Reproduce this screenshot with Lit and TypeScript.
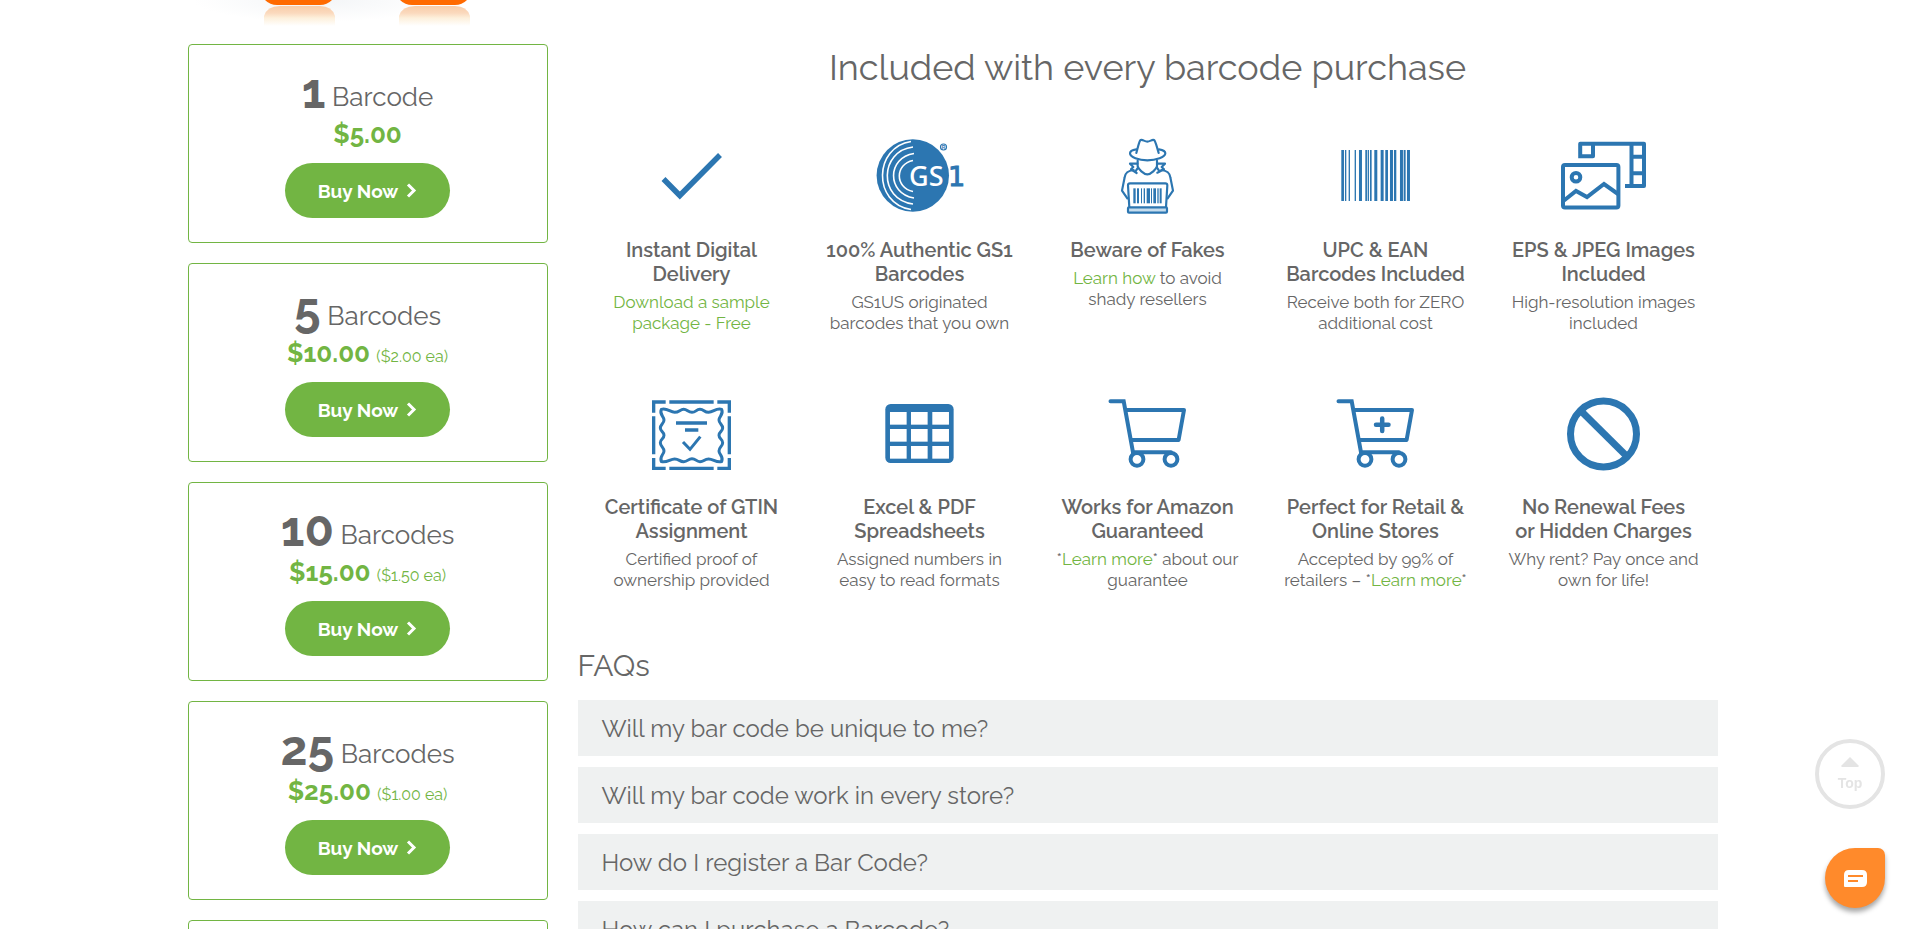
import { LitElement, html, svg, css, nothing, TemplateResult } from "lit";
import { customElement, property } from "lit/decorators.js";

const BLUE = "#2c76b1";

type Bar = [number, number];

const bars = (list: Bar[], top: number, height: number) =>
  list.map(([x, w]) => svg`<rect x=${x} y=${top} width=${w} height=${height} fill=${BLUE}></rect>`);

const UPC_BARS: Bar[] = [
  [724, 8], [735, 4], [746, 4], [764, 4], [777, 9], [796, 5], [803, 4], [810, 5],
  [823, 9], [842, 9], [856, 8], [870, 9], [882, 7], [900, 9], [911, 6], [921, 9],
];

const LAPTOP_BARS: Bar[] = [
  [100, 7], [111, 6], [123, 3], [131, 4], [140, 10], [153, 3], [160, 8], [172, 4], [179, 6],
];

const cartFrame = svg`
  <path d="M10.500 13.300h13.200L33 64.300h38" stroke-linecap="round"></path>
  <path d="M26 22h58l-5.400 30H31" stroke-linejoin="round"></path>
  <circle cx="37" cy="71.300" r="6.400"></circle>
  <circle cx="71" cy="71.300" r="6.400"></circle>`;

const ICONS: Record<string, TemplateResult> = {
  check: svg`<path d="M19.500 48 35.800 64.500 76 24" stroke-width="5.500"></path>`,
  gs1: svg`
    <circle cx="40.800" cy="44.500" r="36.200" fill=${BLUE} stroke="none"></circle>
    <g stroke="#fff" stroke-width="1.600">
      <path d="M39 10.500C2 16 0 72 39 78.500"></path>
      <path d="M41 16C7.500 20 6 68.500 41 73"></path>
      <path d="M42 22.500C15 26.500 14.500 62.500 42 67"></path>
      <path d="M41 29.500C23 33 22.500 56.500 41 60.500"></path>
    </g>
    <text x="37" y="55" font-family="Noto Sans, Open Sans, sans-serif" font-size="27" font-weight="500" fill="#fff" stroke="none">GS</text>
    <text x="76" y="55" font-family="DejaVu Sans, sans-serif" font-size="27" font-weight="500" fill=${BLUE} stroke=${BLUE} stroke-width="1">1</text>
    <circle cx="71.500" cy="16" r="3" stroke-width="1.200"></circle>
    <text x="69.800" y="18.200" font-family="Liberation Sans, sans-serif" font-size="5" font-weight="700" fill=${BLUE} stroke="none">R</text>`,
  fakes: svg`
    <g transform="translate(0 -1) scale(.3333)" stroke-width="6.500" stroke-linecap="round" stroke-linejoin="round">
      <path d="M109 69c4-14 7-30 11-37 5-7 13 3 22 3s17-10 22-3c4 7 8 23 12 37"></path>
      <path d="M109 58c-14 2-19 7-19 12 0 12 26 21 52 21s54-9 54-21c0-5-6-10-19-12"></path>
      <path d="M113 92v17c2 8 18 24 29 24s27-16 29-24V92"></path>
      <path d="M112 101H90l10 10-7 7 17 11M114 113l-8 12M173 101h22l-10 10 7 7-20 10M171 113l8 12"></path>
      <path d="M101 120c-18 2-25 8-27 22l-8 40 16 23M184 120c18 2 25 8 27 22l8 40-16 23"></path>
      <path d="M88 232l-4-66q0-6 6-6h106q6 0 6 6l-4 66"></path>
      <rect x="84" y="232" width="117" height="16" rx="3" fill="#c5dced"></rect>
      <g stroke="none">${bars(LAPTOP_BARS, 175, 45)}</g>
    </g>`,
  upc: svg`<g transform="translate(-228 -1) scale(.3333)" stroke="none">${bars(UPC_BARS, 60, 153)}</g>`,
  images: svg`
    <rect x="7" y="34" width="55.400" height="42.600" rx="2"></rect>
    <circle cx="20" cy="46.300" r="4.300"></circle>
    <path d="M8 69.500 20 60l11 6 17-13 14 10"></path>
    <path d="M24.200 27.300V12.700H88V55H69M37 12.700v12.600H24M75.500 12.700V55M75.500 25.700H88M75.500 42.300H88" stroke-linejoin="round"></path>`,
  certificate: svg`
    <g transform="translate(-4 -3) scale(.3333)">
      <path stroke-width="10" d="M77 51H41v32M88 51h133M232 51h36v32M268 94v114M268 219v31h-36M221 250H88M77 250H41v-31M41 208V94"></path>
      <path stroke-width="9" stroke-linejoin="round" d="M64 73C82 68 90 82 104 82S120 73 131 73 144 82 156 82 168 73 180 73 192 82 206 82 228 68 245 73C252 88 237 94 237 105S248 118 248 129 237 140 237 151 248 162 248 173 237 186 237 198 252 214 245 230C228 234 220 222 206 222S192 230 180 230 168 221 156 221 144 230 131 230 118 222 104 222 82 234 64 230C57 214 72 209 72 198S61 184 61 173 72 162 72 151 61 140 61 129 72 116 72 105 57 88 64 73Z"></path>
      <path stroke-width="11" d="M108 114h93M135 135h40"></path>
      <path stroke-width="9" d="M129 171l21 22 31-38"></path>
    </g>`,
  table: svg`
    <g transform="translate(-232 -3) scale(.3333)" stroke="none">
      <rect x="736" y="57" width="205" height="177" rx="16" fill=${BLUE}></rect>
      ${[81, 132, 183].map((y) =>
        [750, 813, 877].map((x) => svg`<rect x=${x} y=${y} width="50" height="38" fill="#fff"></rect>`))}
    </g>`,
  cart: cartFrame,
  cartPlus: svg`${cartFrame}<path stroke-width="4.500" stroke-linecap="round" d="M48 36.700h12.500M54.200 30.500v12.500"></path>`,
  none: svg`
    <circle cx="47.500" cy="46" r="33" stroke-width="7"></circle>
    <path d="M24.500 22.500 71 68.500" stroke-width="7"></path>`,
};

interface Pack { count: string; unit: string; price: string; each?: string }
interface Feature { icon: string; title: TemplateResult; text: TemplateResult }

const PACKS: Pack[] = [
  { count: "1", unit: "Barcode", price: "$5.00" },
  { count: "5", unit: "Barcodes", price: "$10.00", each: "($2.00 ea)" },
  { count: "10", unit: "Barcodes", price: "$15.00", each: "($1.50 ea)" },
  { count: "25", unit: "Barcodes", price: "$25.00", each: "($1.00 ea)" },
];

const FEATURES: Feature[] = [
  { icon: "check", title: html`Instant Digital<br>Delivery`, text: html`<a href="#sample">Download a sample<br>package - Free</a>` },
  { icon: "gs1", title: html`100% Authentic GS1<br>Barcodes`, text: html`GS1US originated<br>barcodes that you own` },
  { icon: "fakes", title: html`Beware of Fakes`, text: html`<a href="#fakes">Learn how</a> to avoid<br>shady resellers` },
  { icon: "upc", title: html`UPC &amp; EAN<br>Barcodes Included`, text: html`Receive both for ZERO<br>additional cost` },
  { icon: "images", title: html`EPS &amp; JPEG Images<br>Included`, text: html`High-resolution images<br>included` },
  { icon: "certificate", title: html`Certificate of GTIN<br>Assignment`, text: html`Certified proof of<br>ownership provided` },
  { icon: "table", title: html`Excel &amp; PDF<br>Spreadsheets`, text: html`Assigned numbers in<br>easy to read formats` },
  { icon: "cart", title: html`Works for Amazon<br>Guaranteed`, text: html`*<a href="#amazon">Learn more</a>* about our<br>guarantee` },
  { icon: "cartPlus", title: html`Perfect for Retail &amp;<br>Online Stores`, text: html`Accepted by 99% of<br>retailers – *<a href="#retail">Learn more</a>*` },
  { icon: "none", title: html`No Renewal Fees<br>or Hidden Charges`, text: html`Why rent? Pay once and<br>own for life!` },
];

const QUESTIONS = [
  "Will my bar code be unique to me?",
  "Will my bar code work in every store?",
  "How do I register a Bar Code?",
  "How can I purchase a Barcode?",
];

@customElement("price-card")
class PriceCard extends LitElement {
  @property({ attribute: false }) pack?: Pack;

  static styles = css`
    :host {
      display: block;
      box-sizing: border-box;
      min-height: 199px;
      padding: 21px 24px 24px;
      border: 1px solid #72b543;
      border-radius: 4px;
      text-align: center;
    }
    .title {
      margin: 0 0 2px;
      font-size: 26px;
      font-weight: 400;
      line-height: 20px;
    }
    .count {
      font-size: 48px;
      font-weight: 700;
      line-height: 50px;
      vertical-align: -2px;
    }
    .price {
      margin: 0 0 13px;
      color: #72b543;
      font-size: 26px;
      font-weight: 700;
      line-height: 32px;
    }
    .each {
      font-size: 16px;
      font-weight: 400;
      line-height: 16px;
    }
    .buy {
      display: inline-flex;
      align-items: center;
      justify-content: center;
      gap: 8px;
      width: 165px;
      height: 55px;
      padding: 0;
      border: 0;
      border-radius: 28px;
      background: #72b543;
      color: #fff;
      font: inherit;
      font-size: 19px;
      font-weight: 700;
      cursor: pointer;
      vertical-align: top;
    }
  `;

  render() {
    const p = this.pack;
    if (!p) return nothing;
    return html`
      <h3 class="title"><span class="count">${p.count}</span> ${p.unit}</h3>
      <p class="price">${p.price} ${p.each ? html`<span class="each">${p.each}</span>` : nothing}</p>
      <button class="buy" type="button">
        Buy Now
        <svg width="11" height="15" viewBox="0 0 11 15" fill="none" stroke="#fff" stroke-width="3" aria-hidden="true">
          <path d="M2 1.500 8 7.500 2 13.500"></path>
        </svg>
      </button>`;
  }
}

@customElement("feature-tile")
class FeatureTile extends LitElement {
  @property({ attribute: false }) feature!: Feature;

  static styles = css`
    :host {
      display: block;
      text-align: center;
    }
    .icon {
      display: block;
      width: 96px;
      height: 90px;
      margin: 0 auto 17px;
    }
    .title {
      margin: 0 0 6px;
      font-size: 20px;
      font-weight: 600;
      line-height: 24px;
    }
    .text {
      margin: 0;
      font-size: 17px;
      line-height: 21px;
    }
    a {
      color: #72b543;
      text-decoration: none;
    }
  `;

  render() {
    const f = this.feature;
    return html`
      <svg class="icon" viewBox="0 0 96 90" fill="none" stroke=${BLUE} stroke-width="4" aria-hidden="true">${ICONS[f.icon]}</svg>
      <h3 class="title">${f.title}</h3>
      <p class="text">${f.text}</p>`;
  }
}

@customElement("app-root")
class AppRoot extends LitElement {
  static styles = css`
    :host {
      display: block;
      height: 100vh;
      overflow: hidden;
      background: #fff;
      color: #666;
      font-family: Raleway, Lato, sans-serif;
    }
    .container {
      display: grid;
      grid-template-columns: minmax(0, 360fr) minmax(0, 1140fr);
      gap: 30px;
      max-width: 1530px;
      margin: 0 auto;
    }
    .hero {
      display: block;
      width: 100%;
      height: 44px;
    }
    .cards {
      display: grid;
      gap: 20px;
    }
    .main {
      padding-top: 45px;
    }
    .heading {
      margin: 0 0 42px;
      font-size: 36px;
      font-weight: 400;
      line-height: 44px;
      text-align: center;
    }
    .features {
      display: grid;
      grid-template-columns: repeat(5, minmax(0, 1fr));
      row-gap: 54px;
    }
    .faq-heading {
      margin: 58px 0 17px;
      font-size: 30px;
      font-weight: 400;
      line-height: 34px;
    }
    .faqs {
      display: grid;
      gap: 11px;
    }
    .question {
      height: 56px;
      padding: 0 24px;
      border: 0;
      background: #eff1f1;
      color: inherit;
      font: inherit;
      font-size: 24px;
      text-align: left;
      cursor: pointer;
    }
    .floating {
      position: fixed;
      right: 20px;
      bottom: 21px;
      display: flex;
      flex-direction: column;
      align-items: flex-end;
      gap: 39px;
    }
    .top {
      box-sizing: border-box;
      display: flex;
      flex-direction: column;
      align-items: center;
      gap: 6px;
      width: 70px;
      height: 70px;
      padding-top: 14px;
      border: 4px solid #e4e4e4;
      border-radius: 50%;
      color: #e4e4e4;
      font: 600 14px/20px "Liberation Sans", Arial, sans-serif;
      text-decoration: none;
    }
    .chat {
      display: grid;
      place-items: center;
      width: 60px;
      height: 60px;
      padding: 0;
      border: 0;
      border-radius: 50% 7px 50% 50%;
      background: #ff8a2b;
      box-shadow: 0 4px 5px rgba(0, 0, 0, 0.35);
      cursor: pointer;
    }
  `;

  render() {
    return html`
      <div class="container">
        <aside>
          <svg class="hero" viewBox="0 0 360 44" preserveAspectRatio="xMidYMin slice" aria-hidden="true">
            <defs>
              <linearGradient id="fade" x1="0" y1="0" x2="0" y2="1">
                <stop offset="0" stop-color="#f8cda9"></stop>
                <stop offset=".35" stop-color="#fbd9bd"></stop>
                <stop offset=".6" stop-color="#fdf0dc"></stop>
                <stop offset="1" stop-color="#fff"></stop>
              </linearGradient>
              <radialGradient id="haze">
                <stop offset="0" stop-color="#f3f5f7"></stop>
                <stop offset="1" stop-color="#fff"></stop>
              </radialGradient>
            </defs>
            <ellipse cx="130" cy="0" rx="125" ry="22" fill="url(#haze)"></ellipse>
            ${[77, 212].map((x) => svg`
              <path transform="translate(${x} 0)" d="M-1 26V16Q2 6 15 6h40q12 0 15 10v10z" fill="url(#fade)"></path>
              <path transform="translate(${x} 0)" d="M0 0q5 5 12 5h43q7 0 12-5z" fill="#ff6a00"></path>`)}
          </svg>
          <div class="cards">
            ${PACKS.map((p) => html`<price-card .pack=${p}></price-card>`)}
            <price-card></price-card>
          </div>
        </aside>
        <main class="main">
          <h2 class="heading">Included with every barcode purchase</h2>
          <div class="features">
            ${FEATURES.map((f) => html`<feature-tile .feature=${f}></feature-tile>`)}
          </div>
          <h2 class="faq-heading">FAQs</h2>
          <div class="faqs">
            ${QUESTIONS.map((q) => html`<button class="question" type="button">${q}</button>`)}
          </div>
        </main>
      </div>
      <div class="floating">
        <a class="top" href="#top">
          <svg width="18" height="10" viewBox="0 0 18 10" fill="currentColor" aria-hidden="true"><path d="M9 0 17.500 8.500V10H.5V8.500z"></path></svg>
          Top
        </a>
        <button class="chat" type="button" aria-label="Chat">
          <svg width="23" height="17" viewBox="0 0 23 17" aria-hidden="true">
            <path d="M5 0h13q5 0 5 5v7q0 5-5 5H1q-1 0-1-1V5q0-5 5-5z" fill="#fff"></path>
            <path d="M4 6h15M4 11h10" stroke="#ff8a2b" stroke-width="2"></path>
          </svg>
        </button>
      </div>`;
  }
}
